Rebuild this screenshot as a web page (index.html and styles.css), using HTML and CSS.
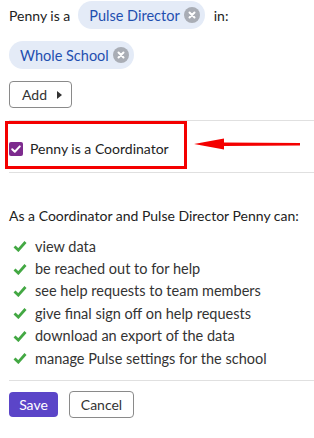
FILE: index.html
```html
<!DOCTYPE html>
<html>
<head>
<meta charset="utf-8">
<link rel="stylesheet" href="styles.css">
</head>
<body>
<div class="page">
  <div class="row row1">
    <span class="label">Penny is a</span>
    <span class="chip">Pulse Director<span class="x"><svg width="16" height="16" viewBox="0 0 16 16"><circle cx="8" cy="8" r="8" fill="#a9adb5"/><path d="M5.5 5.5l5 5M10.5 5.5l-5 5" stroke="#fff" stroke-width="2" stroke-linecap="round"/></svg></span></span>
    <span class="label in">in:</span>
  </div>
  <div class="row row2">
    <span class="chip">Whole School<span class="x"><svg width="16" height="16" viewBox="0 0 16 16"><circle cx="8" cy="8" r="8" fill="#a9adb5"/><path d="M5.5 5.5l5 5M10.5 5.5l-5 5" stroke="#fff" stroke-width="2" stroke-linecap="round"/></svg></span></span>
  </div>
  <button class="add">Add <svg width="5" height="8" viewBox="0 0 5 8"><path d="M0 0L5 4L0 8Z" fill="#333"/></svg></button>

  <div class="coord">
    <label class="check"><span class="box"><svg width="14" height="14" viewBox="0 0 14 14"><rect width="14" height="14" rx="2" fill="#7d2b8e"/><path d="M3.2 7.2l2.6 2.6L10.8 4.4" stroke="#fff" stroke-width="2" fill="none" stroke-linecap="round" stroke-linejoin="round"/></svg></span>Penny is a Coordinator</label>
    <div class="redbox"></div>
    <svg class="arrow" width="110" height="14" viewBox="0 0 110 14"><path d="M0 7L30 1.5V5.5L106 6V8.5L30 9V12.5Z" fill="#f40000"/></svg>
  </div>

  <h2 class="heading">As a Coordinator and Pulse Director Penny can:</h2>
  <ul class="perms">
    <li><svg viewBox="0 0 14 12" width="14" height="12"><path d="M1.5 6.5l3.8 3.6L12.5 2" stroke="#43a843" stroke-width="2.8" fill="none"/></svg>view data</li>
    <li><svg viewBox="0 0 14 12" width="14" height="12"><path d="M1.5 6.5l3.8 3.6L12.5 2" stroke="#43a843" stroke-width="2.8" fill="none"/></svg>be reached out to for help</li>
    <li><svg viewBox="0 0 14 12" width="14" height="12"><path d="M1.5 6.5l3.8 3.6L12.5 2" stroke="#43a843" stroke-width="2.8" fill="none"/></svg>see help requests to team members</li>
    <li><svg viewBox="0 0 14 12" width="14" height="12"><path d="M1.5 6.5l3.8 3.6L12.5 2" stroke="#43a843" stroke-width="2.8" fill="none"/></svg>give final sign off on help requests</li>
    <li><svg viewBox="0 0 14 12" width="14" height="12"><path d="M1.5 6.5l3.8 3.6L12.5 2" stroke="#43a843" stroke-width="2.8" fill="none"/></svg>download an export of the data</li>
    <li><svg viewBox="0 0 14 12" width="14" height="12"><path d="M1.5 6.5l3.8 3.6L12.5 2" stroke="#43a843" stroke-width="2.8" fill="none"/></svg>manage Pulse settings for the school</li>
  </ul>

  <div class="actions">
    <button class="save">Save</button>
    <button class="cancel">Cancel</button>
  </div>
</div>
</body>
</html>
```
FILE: styles.css
```css
html, body {
  margin: 0;
  padding: 0;
  background: #fff;
}
body {
  font-family: Lato, "PT Sans", "Noto Sans", sans-serif;
  font-size: 14px;
  color: #222;
}
.page {
  padding: 1px 0 0 9px;
}
.row {
  display: flex;
  align-items: center;
  height: 28px;
}
.row1 .label {
  margin-right: 8px;
}
.row1 .in {
  margin-left: 9px;
}
.row2 {
  margin-top: 12px;
}
.chip {
  display: inline-flex;
  align-items: center;
  height: 28px;
  border-radius: 14px;
  background: #e4ebf7;
  color: #1f4fb0;
  padding: 0 5px 0 11px;
  font-size: 14.5px;
}
.chip .x {
  display: inline-flex;
  margin-left: 4px;
}
.add {
  margin-top: 12px;
  display: flex;
  align-items: center;
  gap: 10px;
  height: 27px;
  width: 63px;
  padding: 0 0 0 12px;
  border: 1px solid #8a8a8a;
  border-radius: 4px;
  background: #fff;
  font: inherit;
  font-size: 14px;
  color: #333;
}
.coord {
  position: relative;
  margin-top: 12px;
  border-top: 1px solid #e0e0e0;
  border-bottom: 1px solid #e0e0e0;
  height: 51px;
  display: flex;
  align-items: center;
}
.check {
  display: flex;
  align-items: center;
  gap: 7px;
  font-size: 14px;
  margin-top: 4px;
}
.box {
  display: inline-flex;
}
.redbox {
  position: absolute;
  left: -4px;
  top: 0;
  width: 176px;
  height: 42px;
  border: 3px solid #f40000;
}
.arrow {
  position: absolute;
  left: 185px;
  top: 16px;
}
.heading {
  margin: 33px 0 0;
  font-size: 14px;
  font-weight: normal;
  line-height: 20px;
  white-space: nowrap;
}
.perms {
  list-style: none;
  margin: 9px 0 0;
  padding: 0;
  border-bottom: 1px solid #e0e0e0;
  padding-bottom: 11px;
}
.perms li {
  display: flex;
  align-items: center;
  height: 22.4px;
  gap: 8px;
  padding-left: 4px;
  font-size: 14.5px;
  color: #333;
}
.actions {
  display: flex;
  gap: 11px;
  margin-top: 10px;
}
.actions button {
  font: inherit;
  font-size: 14px;
  border-radius: 4px;
}
.save {
  width: 49px;
  height: 25px;
  background: #5b45c8;
  color: #fff;
  border: none;
  margin-top: 1px;
}
.cancel {
  width: 65px;
  height: 27px;
  background: #fff;
  color: #333;
  border: 1px solid #8a8a8a;
}
```
